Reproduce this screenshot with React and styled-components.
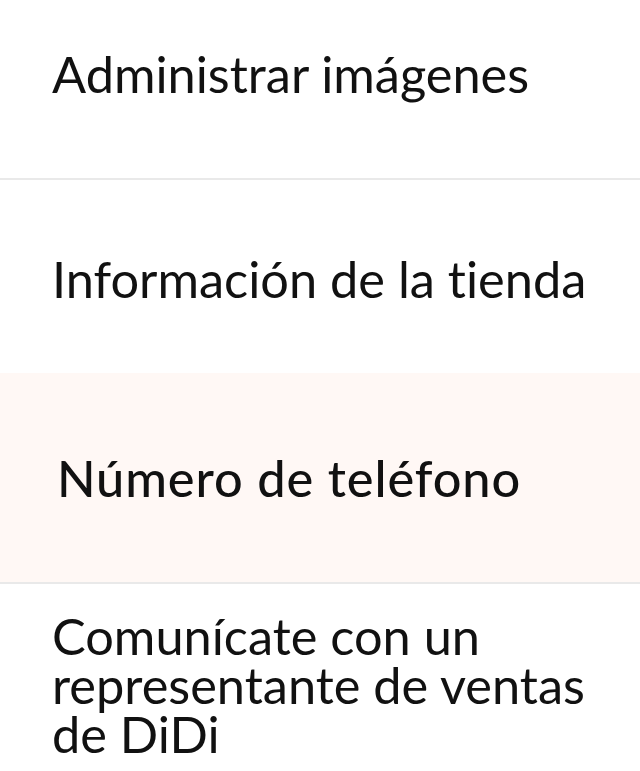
import React from 'react'
import styled, { createGlobalStyle } from 'styled-components'

const Global = createGlobalStyle`
  body {
    margin: 0;
    background: #fff;
  }
`

const Menu = styled.ul`
  list-style: none;
  margin: 0;
  padding: 0;
  font-family: Lato, 'Noto Sans', sans-serif;
  font-size: 50.5px;
  font-variant-ligatures: none;
  color: #111;
`

const Item = styled.li`
  box-sizing: border-box;
  padding: ${p => p.$pad};
  padding-left: ${p => (p.$active ? '57px' : '52px')};
  padding-right: 40px;
  background: ${p => (p.$active ? '#fff8f5' : '#fff')};
  border-bottom: ${p => (p.$divider ? '2px solid #e9e9e9' : 'none')};
  font-weight: ${p => (p.$active ? 500 : 400)};
  letter-spacing: ${p => (p.$active ? '0.9px' : '0')};
  line-height: ${p => p.$lh || '60px'};
  cursor: pointer;
`

const items = [
  { label: 'Administrar imágenes', pad: '44px 0 74px', divider: true },
  { label: 'Información de la tienda', pad: '69px 0 64px' },
  { label: 'Número de teléfono', pad: '75px 0 74px', active: true, divider: true },
  { label: 'Comunícate con un representante de ventas de DiDi', pad: '27px 0 20px', lh: '49px' },
]

export default function App() {
  return (
    <>
      <Global />
      <Menu>
        {items.map(it => (
          <Item key={it.label} $pad={it.pad} $active={it.active} $divider={it.divider} $lh={it.lh}>
            {it.label}
          </Item>
        ))}
      </Menu>
    </>
  )
}
